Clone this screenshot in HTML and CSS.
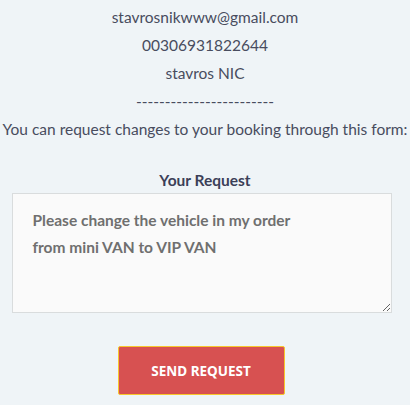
FILE: index.html
```html
<!DOCTYPE html>
<html lang="en">
  <head>
    <meta charset="UTF-8" />
    <meta name="viewport" content="width=device-width, initial-scale=1.0" />
    <title>Booking Request</title>
    <link rel="stylesheet" href="styles.css">
  </head>
  <body>
    <div class="details">
      <p>stavrosnikwww@gmail.com</p>
      <p>00306931822644</p>
      <p>stavros NIC</p>
      <p>------------------------</p>
      <p>You can request changes to your booking through this form:</p>
    </div>
    <form class="request-form">
      <label for="request">Your Request</label>
      <textarea id="request" name="request">Please change the vehicle in my order
from mini VAN to VIP VAN</textarea>
      <button type="button">SEND REQUEST</button>
    </form>
  </body>
</html>
```

FILE: styles.css
```css
body {
  margin: 0;
  background: #eff4f7;
  color: #484c5e;
  font-family: Lato, Arial, sans-serif;
  font-size: 15.5px;
  text-align: center;
}
.details {
  padding-top: 3px;
}
.details p {
  margin: 0;
  line-height: 28px;
  white-space: nowrap;
}
.request-form {
  display: flex;
  flex-direction: column;
  align-items: center;
  padding-top: 25px;
}
.request-form label {
  font-weight: bold;
  color: #3b3f58;
  line-height: 24px;
  margin-bottom: 1px;
}
.request-form textarea {
  box-sizing: border-box;
  width: 380px;
  height: 120px;
  margin-left: -7px;
  padding: 13px 20px;
  border: 1px solid #d9dcdd;
  border-radius: 0;
  background: #fafafa;
  color: #6f6f6f;
  font-family: Lato, Arial, sans-serif;
  font-size: 15.5px;
  font-weight: bold;
  line-height: 27px;
}
.request-form button {
  margin-top: 33px;
  margin-left: -8px;
  width: 167px;
  height: 49px;
  border: 1px solid #f7c72c;
  border-radius: 2px;
  background: #d75151;
  color: #fff;
  font-family: "Noto Sans", Arial, sans-serif;
  font-size: 13.5px;
  font-weight: bold;
  cursor: pointer;
}
```
